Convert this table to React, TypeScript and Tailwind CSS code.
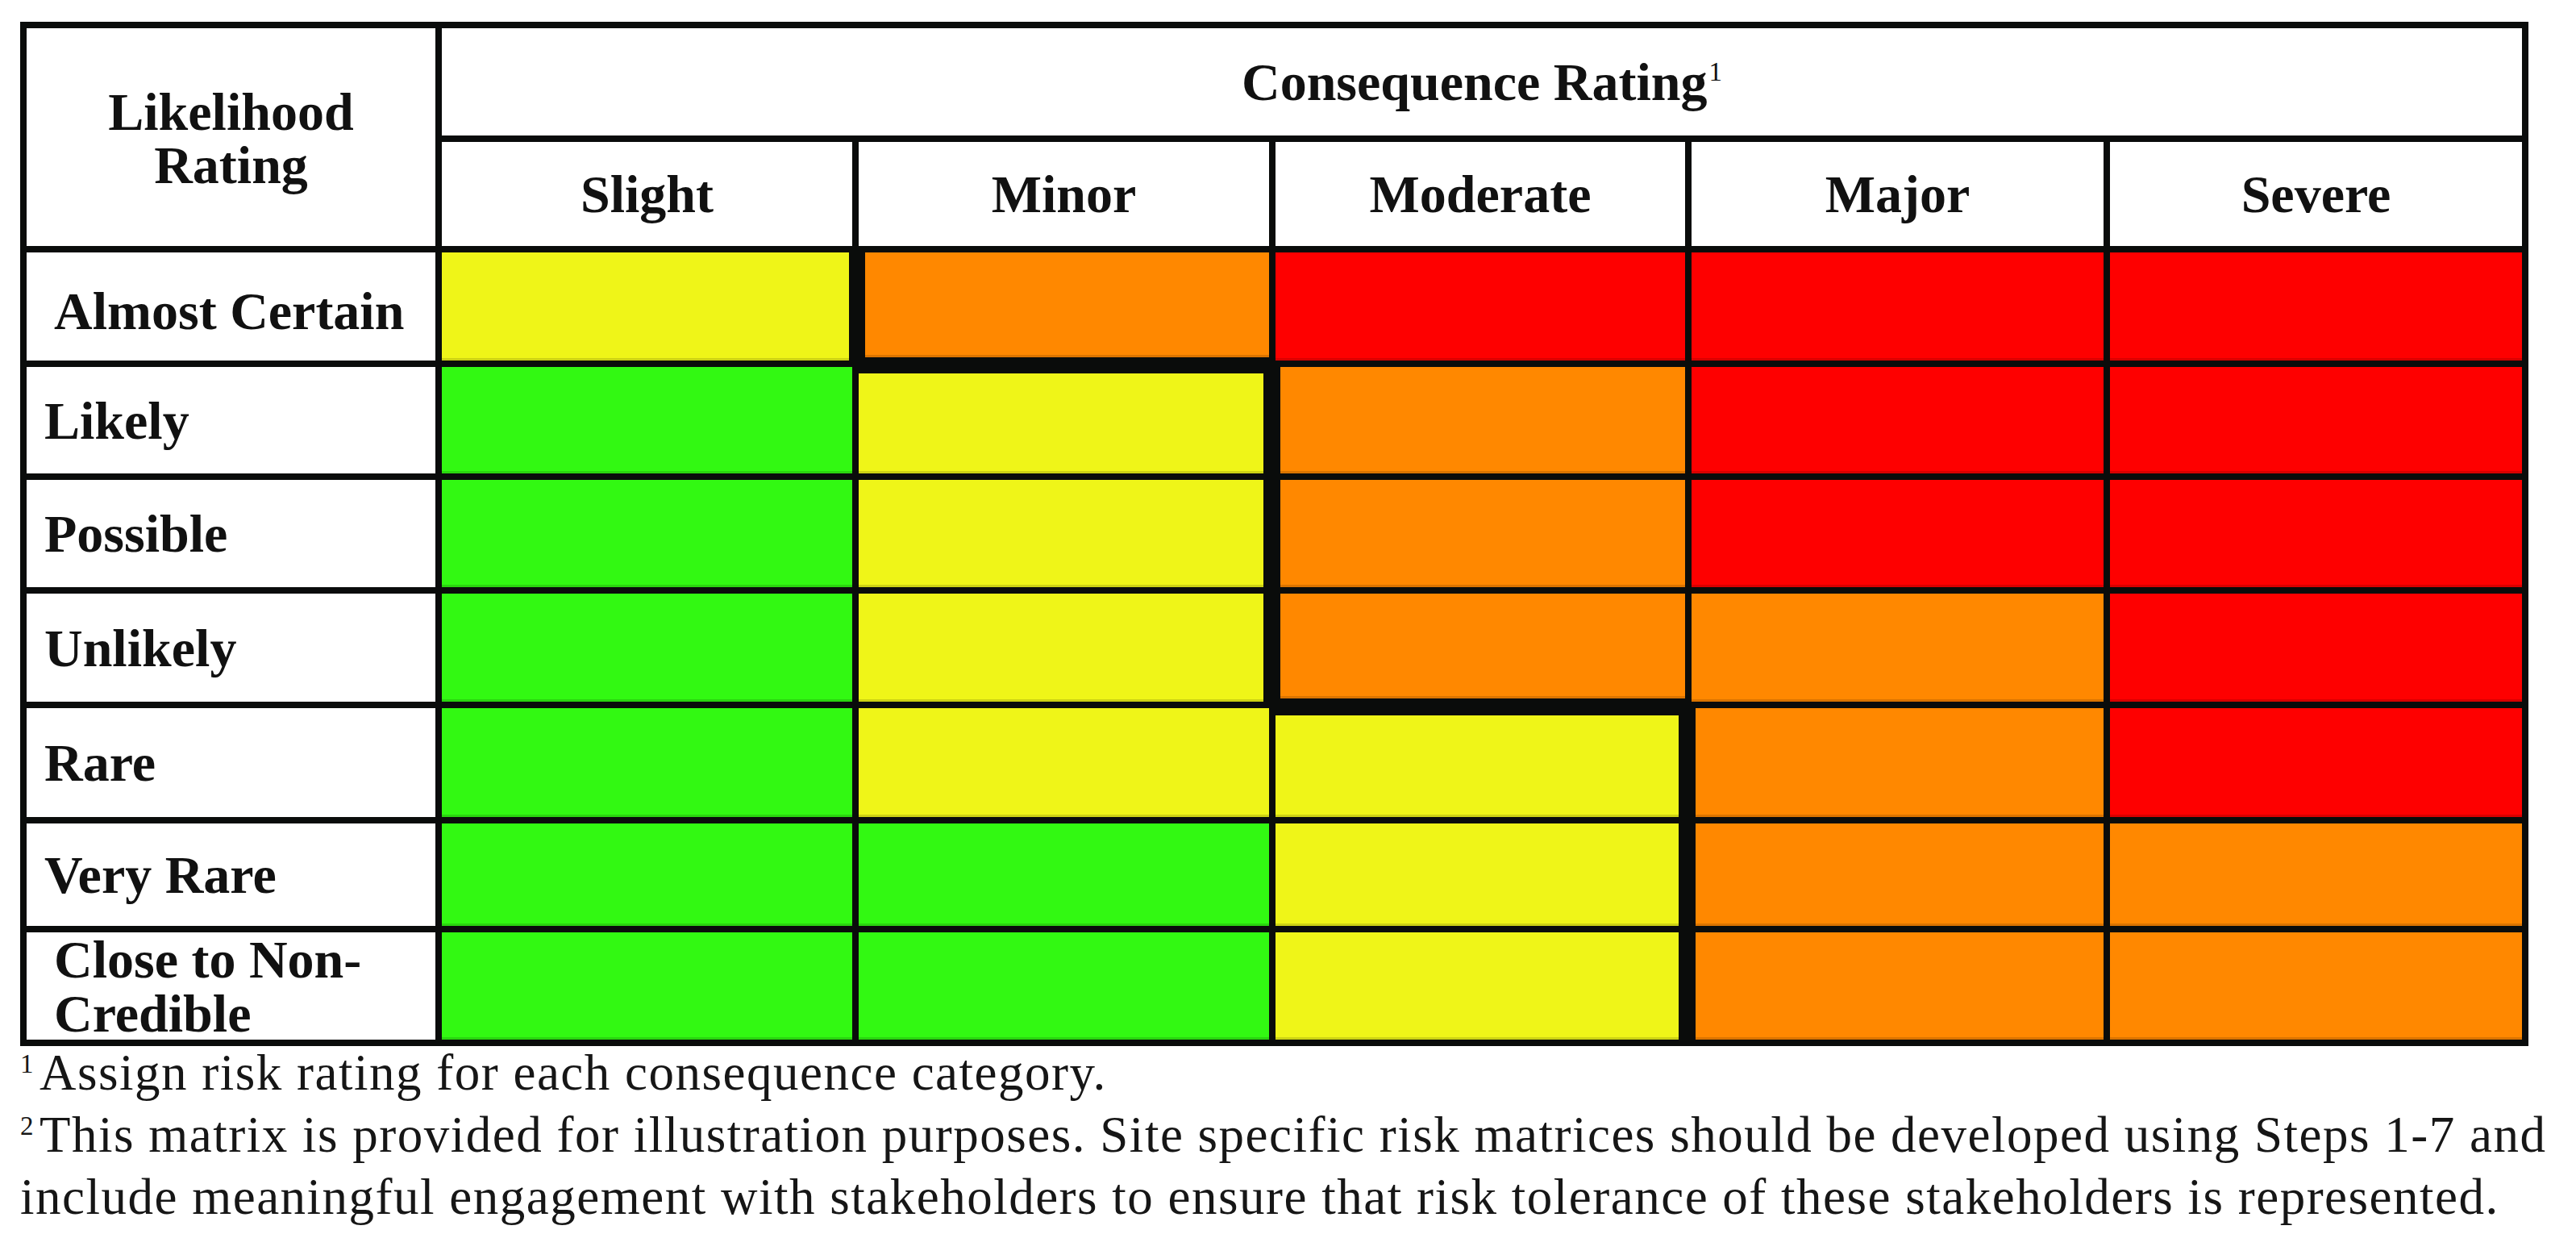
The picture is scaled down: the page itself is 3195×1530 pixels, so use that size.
import React from "react";

const G = "bg-[#32f912]";
const Y = "bg-[#eff518]";
const O = "bg-[#ff8800]";
const R = "bg-[#fe0000]";

const LINE = "border-[#0a0c0b]";

interface Cell {
  bg: string;
  edge?: string;
}

interface MatrixRow {
  label: React.ReactNode;
  pad: string;
  cells: Cell[];
}

// thick staircase line between tolerable / intolerable is drawn with extra borders
const rows: MatrixRow[] = [
  {
    label: "Almost Certain",
    pad: "pl-[34px] pt-[10px]",
    cells: [
      { bg: Y, edge: "border-r-[4px]" },
      { bg: O, edge: "border-l-[8px] border-b-[4px]" },
      { bg: R },
      { bg: R },
      { bg: R },
    ],
  },
  {
    label: "Likely",
    pad: "pl-[22px]",
    cells: [
      { bg: G },
      { bg: Y, edge: "border-t-[8px] border-r-[7px]" },
      { bg: O, edge: "border-l-[6px]" },
      { bg: R },
      { bg: R },
    ],
  },
  {
    label: "Possible",
    pad: "pl-[22px]",
    cells: [
      { bg: G },
      { bg: Y, edge: "border-r-[7px]" },
      { bg: O, edge: "border-l-[6px]" },
      { bg: R },
      { bg: R },
    ],
  },
  {
    label: "Unlikely",
    pad: "pl-[22px]",
    cells: [
      { bg: G },
      { bg: Y, edge: "border-r-[7px]" },
      { bg: O, edge: "border-l-[6px] border-b-[4px]" },
      { bg: O },
      { bg: R },
    ],
  },
  {
    label: "Rare",
    pad: "pl-[22px]",
    cells: [
      { bg: G },
      { bg: Y },
      { bg: Y, edge: "border-t-[9px] border-r-[8px]" },
      { bg: O, edge: "border-l-[5px]" },
      { bg: R },
    ],
  },
  {
    label: "Very Rare",
    pad: "pl-[22px]",
    cells: [
      { bg: G },
      { bg: G },
      { bg: Y, edge: "border-r-[8px]" },
      { bg: O, edge: "border-l-[5px]" },
      { bg: O },
    ],
  },
  {
    label: (
      <>
        Close to Non-
        <br />
        Credible
      </>
    ),
    pad: "pl-[34px] leading-[67px]",
    cells: [
      { bg: G },
      { bg: G },
      { bg: Y, edge: "border-r-[8px]" },
      { bg: O, edge: "border-l-[5px]" },
      { bg: O },
    ],
  },
];

const consequences = ["Slight", "Minor", "Moderate", "Major", "Severe"];

export default function App() {
  return (
    <div className="min-h-screen w-[3195px] bg-white pl-[25px] pt-[27px] font-['Liberation_Serif','Times_New_Roman',serif] text-[#111111]">
      <div className="grid w-fit grid-cols-[507px_509px_509px_508px_511px_511px] grid-rows-[133px_129px_134px_132px_133px_134px_135px_127px_133px] gap-[8px] bg-[#0a0c0b] p-[8px] text-[66px] font-bold">
        <div className="row-span-2 flex flex-col items-center justify-center bg-white pt-[4px] text-center leading-[66px]">
          <span>Likelihood</span>
          <span>Rating</span>
        </div>
        <div className="col-span-5 flex items-center justify-center bg-white">
          <span>
            Consequence Rating
            <span className="relative -top-[24px] ml-[2px] text-[33px] font-normal">1</span>
          </span>
        </div>
        {consequences.map((c) => (
          <div key={c} className="flex items-center justify-center bg-white">
            {c}
          </div>
        ))}

        {rows.map((row, i) => (
          <React.Fragment key={i}>
            <div className={`flex items-center bg-white ${row.pad}`}>
              <span>{row.label}</span>
            </div>
            {row.cells.map((cell, j) => (
              <div
                key={j}
                className={`${cell.bg} ${cell.edge ?? ""} ${LINE} shadow-[inset_0_-3px_0_rgba(0,0,0,0.14)]`}
              />
            ))}
          </React.Fragment>
        ))}
      </div>

      <div className="text-[63px] leading-[67px] tracking-[1.5px] text-[#161616]">
        <div className="whitespace-nowrap">
          <span className="relative -top-[21px] mr-[6px] text-[33px]">1</span>
          Assign risk rating for each consequence category.
        </div>
        <div className="whitespace-nowrap">
          <span className="relative -top-[21px] mr-[6px] text-[33px]">2</span>
          This matrix is provided for illustration purposes. Site specific risk matrices should be developed using Steps 1-7 and
        </div>
        <div className="whitespace-nowrap">
          include meaningful engagement with stakeholders to ensure that risk tolerance of these stakeholders is represented.
        </div>
      </div>
    </div>
  );
}
